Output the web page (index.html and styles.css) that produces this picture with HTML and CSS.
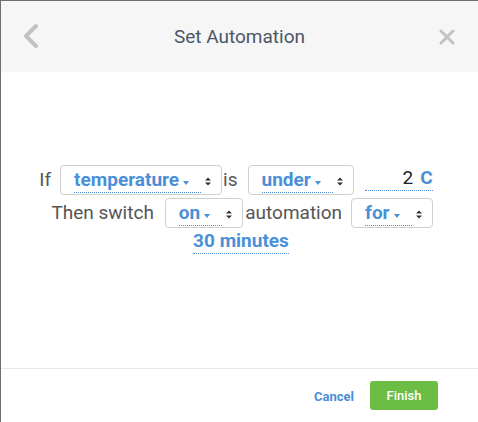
FILE: index.html
```html
<!DOCTYPE html>
<html>
<head>
<meta charset="utf-8">
<link rel="stylesheet" href="styles.css">
</head>
<body>
<div class="modal">
  <header class="head">
    <span class="back">
      <svg width="16" height="26" viewBox="0 0 16 26"><polyline points="13,3 3,13 13,23" fill="none" stroke="#c2c2c2" stroke-width="4" stroke-linecap="round" stroke-linejoin="round"/></svg>
    </span>
    <h1 class="title">Set Automation</h1>
    <span class="close">
      <svg width="16" height="16" viewBox="0 0 16 16"><path d="M2 2 L14 14 M14 2 L2 14" stroke="#c2c2c2" stroke-width="3" stroke-linecap="round"/></svg>
    </span>
  </header>
  <main class="body">
    <div class="row row1">
      <span class="word w-if">If</span>
      <span class="sel"><span class="lbl">temperature<i class="caret"></i></span><span class="arr"><svg width="6" height="9" viewBox="0 0 6 9"><path d="M0 3.5 L3 0.5 L6 3.5Z M0 5.5 L3 8.5 L6 5.5Z" fill="#333"/></svg></span></span>
      <span class="word w-is">is</span>
      <span class="sel"><span class="lbl">under<i class="caret"></i></span><span class="arr"><svg width="6" height="9" viewBox="0 0 6 9"><path d="M0 3.5 L3 0.5 L6 3.5Z M0 5.5 L3 8.5 L6 5.5Z" fill="#333"/></svg></span></span>
      <span class="field"><span class="num">2</span><span class="unit">C</span></span>
    </div>
    <div class="row row2">
      <span class="word w-then">Then switch</span>
      <span class="sel"><span class="lbl">on<i class="caret"></i></span><span class="arr"><svg width="6" height="9" viewBox="0 0 6 9"><path d="M0 3.5 L3 0.5 L6 3.5Z M0 5.5 L3 8.5 L6 5.5Z" fill="#333"/></svg></span></span>
      <span class="word w-auto">automation</span>
      <span class="sel"><span class="lbl">for<i class="caret"></i></span><span class="arr"><svg width="6" height="9" viewBox="0 0 6 9"><path d="M0 3.5 L3 0.5 L6 3.5Z M0 5.5 L3 8.5 L6 5.5Z" fill="#333"/></svg></span></span>
    </div>
    <div class="row row3">
      <span class="dur">30 minutes</span>
    </div>
  </main>
  <footer class="foot">
    <a class="cancel">Cancel</a>
    <button class="finish">Finish</button>
  </footer>
</div>
</body>
</html>
```
FILE: styles.css
```css
html, body {
  margin: 0;
  padding: 0;
  background: #fff;
}
body {
  width: 478px;
  height: 422px;
  overflow: hidden;
  font-family: Roboto, "Liberation Sans", sans-serif;
}
.modal {
  box-sizing: border-box;
  width: 478px;
  height: 422px;
  border-top: 1px solid #6f6f6f;
  border-left: 1px solid #6f6f6f;
  display: flex;
  flex-direction: column;
}
.head {
  height: 71px;
  flex: none;
  background: #f6f6f6;
  display: flex;
  align-items: center;
  justify-content: space-between;
  padding: 0 23px 0 22px;
}
.back {
  display: flex;
  width: 16px;
  height: 26px;
  margin-top: -1px;
}
.close {
  display: flex;
  width: 16px;
  height: 16px;
  margin-top: 1px;
}
.title {
  margin: 0 0 0 1px;
  font-size: 19px;
  font-weight: 400;
  color: #4b5666;
}
.body {
  flex: 1;
  padding-top: 93px;
  color: #555;
  font-size: 19px;
}
.row {
  display: flex;
  justify-content: center;
  align-items: center;
}
.row1 {
  height: 30px;
  padding-right: 7px;
}
.row2 {
  height: 30px;
  margin-top: 3px;
  padding-left: 5px;
}
.row3 {
  margin-top: 0;
  padding-left: 3px;
}
.word {
  line-height: 30px;
  white-space: nowrap;
}
.w-if { margin-right: 9px; }
.w-is { margin: 0 10px 0 1px; }
.w-then { margin-right: 11px; }
.w-auto { margin: 0 9px 0 2px; }
.sel {
  box-sizing: border-box;
  height: 30px;
  border: 1px solid #cfcfcf;
  border-radius: 4px;
  padding: 0 10px 0 13px;
  display: inline-flex;
  align-items: flex-end;
  background: #fff;
}
.lbl {
  color: #4a8fd8;
  font-weight: 700;
  line-height: 24px;
  padding-right: 12px;
  border-bottom: 1px dotted #4a8fd8;
  margin-bottom: 1px;
  display: inline-flex;
  align-items: baseline;
}
.caret {
  display: inline-block;
  width: 0;
  height: 0;
  border-top: 4px solid #4a8fd8;
  border-left: 3.5px solid transparent;
  border-right: 3.5px solid transparent;
  margin-left: 4px;
  position: relative;
  top: -1px;
}
.arr {
  display: flex;
  align-self: center;
  margin-left: 4px;
  margin-top: 2px;
}
.field {
  box-sizing: border-box;
  width: 68px;
  margin-left: 11px;
  display: inline-flex;
  justify-content: flex-end;
  align-items: baseline;
  border-bottom: 1px dotted #4a8fd8;
  line-height: 24px;
  align-self: flex-end;
  margin-bottom: 4px;
}
.num {
  color: #222;
}
.unit {
  color: #4a8fd8;
  font-weight: 700;
  margin-left: 7px;
}
.dur {
  color: #4a8fd8;
  font-weight: 700;
  line-height: 25px;
  border-bottom: 1px dotted #4a8fd8;
}
.foot {
  flex: none;
  height: 52px;
  border-top: 1px solid #e6e6e6;
  display: flex;
  align-items: center;
  justify-content: flex-end;
  padding-right: 40px;
  padding-bottom: 1px;
}
.cancel {
  color: #4a8fd8;
  font-size: 13px;
  font-weight: 700;
  margin-right: 16px;
  margin-top: 2px;
}
.finish {
  width: 68px;
  height: 29px;
  border: none;
  border-radius: 3px;
  background: #6cbd43;
  color: #fff;
  font-family: Roboto, "Liberation Sans", sans-serif;
  font-size: 13px;
  font-weight: 500;
  padding: 0;
}
```
